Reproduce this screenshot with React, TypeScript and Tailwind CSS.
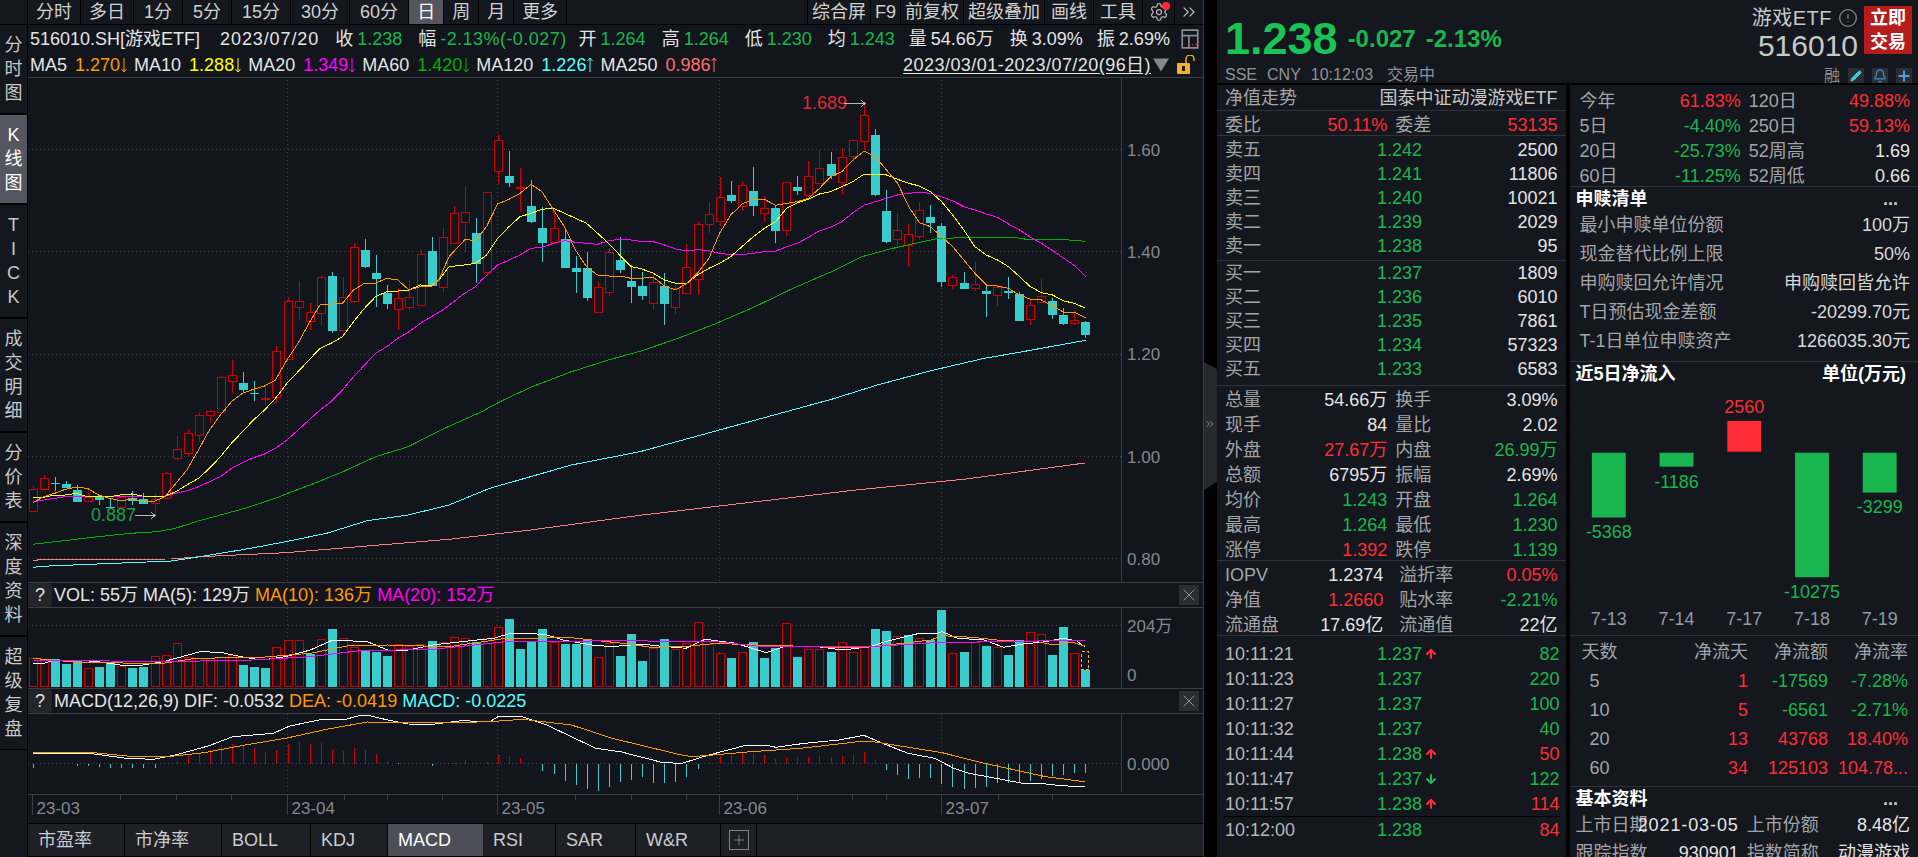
import { ArrowDown, ArrowUp, Bell, ChevronsRight, CircleAlert, Pencil, Plus, Settings, X } from "lucide-react";

const green = "text-[#19b64f]";
const red = "text-[#ff2c35]";
const white = "text-[#e4e4e4]";
const label = "text-[#a2a4a8]";

const CYAN = "#39cccc";
const RED = "#cc0000";
const DOT = "#3e4146";
const AXIS = "#3a3c42";
const AXIS_TEXT = "#85888e";

// zoomed reads -> real px
const conv = (a: number[], ox: number, sx: number, oy: number) => {
  const out: string[] = [];
  for (let i = 0; i < a.length; i += 2) out.push(`${(ox + a[i] / sx).toFixed(1)},${(oy + a[i + 1] / 3).toFixed(1)}`);
  return out;
};
const lo = (a: number[]) => conv(a, 0, 2.45, 280);
const hi = (a: number[]) => conv(a, 0, 2.45, 0);
const rt = (a: number[]) => conv(a, 640, 2.613, 100);
const subL = (a: number[]) => conv(a, 0, 2.45, 570);
const subR = (a: number[]) => conv(a, 640, 2.613, 570);

const ma5 = [
  ...lo([80,668,107,650,134,640,160,628,187,622,214,625,241,645,268,655,295,662,322,658,349,663,376,665,404,650,431,610,458,570,486,510,513,450,540,405,567,365,594,340,621,328,648,318,675,300,703,240,730,190,757,130,784,75,811,72,839,70,866,30,893,10,920,10,947,-5,975,0,1002,30,1030,20,1057,20,1075,0]),
  ...hi([1100,770,1140,718,1165,722,1192,680,1219,612,1247,598,1274,580,1301,553,1328,575,1356,630,1383,680,1410,750,1437,800,1464,825,1491,828,1518,828,1546,835]),
  ...rt([0,535,35,532,64,558,93,570,122,550,150,520,180,475,208,400,237,345,266,312,296,298,325,298,354,316,383,310,411,305,440,295,469,265,498,230,527,215,556,180,586,153,615,170,644,210,673,250,702,320,730,368,759,380,788,410,817,440,846,480,875,520,905,555,934,558,963,565,992,585,1020,598,1049,600,1078,618,1107,637,1136,637,1164,653]),
].join(" ");
const ma10 = [
  ...lo([80,652,107,652,134,645,160,645,187,640,214,650,241,650,268,650,295,645,322,642,349,648,376,650,404,648,431,635,458,615,486,595,513,565,540,530,567,490,594,455,621,420,648,390,675,355,703,310,730,275,757,240,784,205,811,190,839,170,866,125,893,85,920,50,947,35,975,33,1002,30,1030,15,1057,17,1075,0]),
  ...hi([1100,800,1138,795,1165,790,1192,765,1219,715,1247,680,1274,650,1301,640,1328,628,1356,625,1383,640,1410,655,1437,670,1464,700,1491,730,1518,765,1546,800]),
  ...rt([0,505,35,520,64,540,93,550,122,550,150,525,180,505,208,490,237,470,266,440,296,410,325,385,354,365,383,325,411,308,440,298,469,282,498,275,527,260,556,245,586,222,615,222,644,225,673,238,702,250,730,258,759,275,788,305,817,345,846,390,875,440,905,465,934,480,963,500,992,530,1020,560,1049,578,1078,585,1107,603,1136,610,1164,625]),
].join(" ");
const ma20 = [
  ...lo([80,665,107,660,134,655,160,650,187,650,376,650,404,648,431,640,458,632,486,620,513,605,540,590,567,565,594,548,621,533,648,522,675,505,703,480,730,450,757,420,784,390,811,365,839,330,866,290,893,255,920,220,947,200,975,175,1002,155,1030,130,1057,110,1084,90,1111,65,1138,40,1165,20,1180,0]),
  ...hi([1219,795,1247,780,1274,765,1301,745,1328,742,1356,730,1383,722,1410,727,1437,730,1464,733,1491,722,1518,718,1546,720]),
  ...rt([0,424,35,425,64,435,93,447,122,453,150,449,180,452,208,460,237,464,266,464,296,460,325,455,354,454,383,440,411,430,440,412,469,392,498,382,527,365,556,338,586,315,615,305,644,295,673,285,702,280,730,277,759,280,788,290,817,303,846,320,875,330,905,342,934,352,963,372,992,390,1020,412,1049,430,1078,452,1107,475,1136,497,1164,530]),
].join(" ");
const ma60 = [
  ...lo([80,793,135,785,240,770,320,760,385,755,430,745,480,725,540,705,600,685,675,655,705,640,770,610,840,575,920,530,1000,500,1080,450,1180,395,1225,365,1300,322,1400,275,1490,240,1568,214]),
  ...rt([100,715,200,670,300,620,400,565,500,515,580,470,650,448,720,430,780,415,860,413,975,412,1010,418,1120,420,1164,424]),
].join(" ");
const ma120 = [
  ...lo([80,862,120,858,280,850,420,843,490,830,600,808,700,785,800,760,900,722,1000,705,1100,675,1200,625,1300,590,1400,555,1568,515]),
  ...rt([503,897,620,855,760,812,900,775,1000,755,1164,721]),
].join(" ");
const ma250 = [
  ...lo([80,841,120,838,420,837,490,830,700,818,900,798,1100,778,1300,750,1568,706]),
  "856,490 966,479 1085,463",
].join(" ");

// c = up (red hollow) or down (cyan), top, bottom, wick high, wick low (zoomed y)
type K = [0 | 1, number, number, number, number];
const ks7: K[] = [
  [1,626,692,618,692],[1,595,628,586,632],[0,605,606,592,632],[0,610,622,603,622],[0,628,663,616,667],[1,650,662,640,665],[0,648,657,645,675],[0,677,680,658,680],[1,652,682,645,682],[0,652,660,632,675],[0,655,668,640,672],[1,658,670,640,700],[1,580,655,577,657],[1,508,535,468,542],[1,460,520,448,527],[1,406,466,400,486],[1,394,406,390,430],[1,290,395,287,400],[1,284,304,240,340],[0,307,327,276,340],[0,337,338,303,362],[1,353,355,320,375],[1,214,352,198,368],[1,64,236,52,240],[1,64,82,3,120],[1,97,124,68,150],
];
const ks1: K[] = [
  [1,830,940,825,975],[0,825,990,815,1000],[1,890,990,830,990],[1,740,902,730,910],[0,748,797,718,805],[0,816,833,765,920],[0,877,910,855,928],[1,895,928,865,990],[1,892,922,840,930],[1,762,915,750,915],[0,750,855,712,855],[1,710,862,685,875],[1,638,728,618,728],[1,637,665,558,755],[0,696,790,655,850],[1,577,815,577,825],[1,421,512,405,552],[0,525,545,453,560],[1,560,561,505,635],[0,615,663,540,670],[0,682,725,620,785],[1,685,725,630,725],[0,715,800,685,805],[0,800,812,768,880],[0,800,890,755,902],[1,862,935,845,935],[1,757,875,745,887],[0,778,808,712,818],[0,840,857,795,910],
];
const ks8: K[] = [
  [0,555,585,516,600],[1,547,610,527,630],[0,555,608,519,675],[1,565,620,555,643],[1,502,578,432,580],[1,373,538,363,585],[1,343,373,305,398],[1,292,364,232,378],[0,282,300,243,308],[1,256,318,243,333],[0,270,314,202,348],[1,325,338,288,365],[0,321,389,318,428],[1,247,391,247,408],[0,258,270,228,285],[1,229,284,183,290],[1,205,248,150,250],[0,189,225,156,238],[1,172,245,143,285],[1,121,169,118,185],[1,46,124,10,150],[0,102,282,88,288],[0,330,423,270,428],[1,391,418,340,442],[1,403,436,372,500],[1,331,407,306,416],[0,348,366,315,400],[0,375,543,370,560],[1,532,556,525,567],[0,546,565,516,568],[1,553,563,486,572],[0,570,578,555,652],[1,560,586,555,618],[0,570,576,531,597],[0,578,660,575,663],[1,616,658,598,675],[1,589,607,537,610],[0,600,642,595,657],[0,642,668,625,675],[1,661,670,632,675],[0,663,701,663,714],
];
const candles = [
  ...ks7.map((k) => [k[0], 280 + k[1] / 3, 280 + k[2] / 3, 280 + k[3] / 3, 280 + k[4] / 3]),
  ...ks1.map((k) => [k[0], k[1] / 3, k[2] / 3, k[3] / 3, k[4] / 3]),
  ...ks8.map((k) => [k[0], 100 + k[1] / 3, 100 + k[2] / 3, 100 + k[3] / 3, 100 + k[4] / 3]),
];
const barX = (i: number) => Math.round(32.6 + 11.083 * i) + 0.5;

const volTops: [0 | 1, number][] = [
  [1,265],[1,268],[0,265],[0,278],[0,270],[1,295],[0,288],[0,272],[1,288],[0,290],[0,287],[1,258],[1,255],[1,220],[1,262],[1,265],[1,265],[1,260],[1,255],[0,282],[0,288],[0,291],[1,232],[1,210],[1,210],[0,250],[1,208],[0,173],[1,205],[1,232],[0,240],[0,243],[0,255],[1,222],[1,228],[1,222],[0,210],[1,215],[1,202],[1,205],[0,213],[1,203],[1,172],[0,144],[0,234],[0,210],[0,174],[1,217],[0,218],[0,218],[0,203],[1,262],[1,220],[0,255],[0,189],
  [0,270],[1,235],[0,205],[1,238],[1,220],[1,155],[1,222],[1,248],[0,262],[1,245],[0,213],[0,262],[0,230],[1,158],[0,258],[1,238],[1,238],[0,243],[1,217],[1,247],[1,230],[0,174],[0,180],[1,198],[0,192],[1,205],[0,208],[0,117],[1,250],[0,243],[1,215],[0,225],[1,230],[0,252],[0,207],[1,187],[1,193],[0,252],[0,168],[1,250],[0,297],
];
const volWhite = [
  ...subL([80,280,107,280,134,270,187,270,240,275,295,285,350,285,400,275,440,262,490,245,540,247,590,260,640,270,700,260,760,240,815,210,900,215,950,240,1000,240,1060,225,1130,215,1210,205,1250,190,1300,190,1340,195,1380,210,1450,225,1500,230]),
  ...subR([0,222,50,228,120,235,170,208,250,220,330,248,380,228,450,228,530,240,600,230,640,215,730,190,770,192,790,185,830,205,900,210,950,232,1000,222,1060,215,1105,205,1140,212,1162,230]),
].join(" ");
const volOrange = [
  ...subL([80,265,200,278,400,280,480,265,640,262,760,250,850,228,950,225,1100,230,1240,205,1400,203,1540,222]),
  ...subR([30,232,130,228,200,220,300,225,400,228,500,232,590,232,700,218,760,210,790,197,870,202,950,212,1040,215,1080,225,1130,217,1162,228]),
].join(" ");
const volPink = [
  ...subL([80,270,400,275,620,270,760,260,880,242,1060,238,1240,215,1540,212]),
  ...subR([130,215,200,215,320,230,600,230,770,218,1040,213,1162,212]),
].join(" ");

const macdEnds = [
  594,583,582,582,587,587,590,593,594,593,593,593,582,574,558,550,540,526,522,525,533,545,540,521,516,521,519,537,543,534,540,552,574,580,582,582,589,582,578,570,582,577,555,558,564,582,603,612,632,645,658,663,650,635,630,
  620,640,640,635,620,597,579,558,555,548,550,555,568,560,560,560,558,560,558,555,545,570,600,615,627,623,623,642,650,656,653,652,640,638,638,632,628,618,615,608,610,
];
const dif = [
  ...subL([80,550,150,550,230,552,310,565,375,568,430,555,510,528,570,500,670,490,710,468,790,448,840,450,880,437,905,437,950,450,1000,462,1060,463,1130,452,1200,455,1220,440,1280,440,1340,465,1400,500,1460,535,1520,545,1568,560]),
  ...subR([60,578,110,580,180,555,270,528,330,526,355,532,430,520,520,510,585,496,630,518,700,550,770,565,820,595,860,610,930,625,1000,640,1060,642,1100,647,1162,650]),
].join(" ");
const dea = [
  ...subL([80,546,150,546,230,548,310,558,410,560,500,548,600,525,700,505,800,478,900,456,1000,458,1100,458,1200,455,1280,448,1400,465,1500,505,1568,525]),
  ...subR([100,553,135,560,190,555,290,545,420,535,570,515,610,515,790,548,900,580,1060,620,1162,635]),
].join(" ");

const monthX = [287, 497.5, 719, 941.5];

function VDots({ y1, y2 }: { y1: number; y2: number }) {
  return (
    <>
      {monthX.map((x) => (
        <line key={x} x1={x} x2={x} y1={y1} y2={y2} stroke={DOT} strokeDasharray="1 3" />
      ))}
    </>
  );
}

function MainChart() {
  return (
    <svg className="block h-full w-full" viewBox="28 78 1175 504" shapeRendering="crispEdges">
      {[149.5, 251.5, 354, 456.5, 558.5].map((y) => (
        <line key={y} x1="28" x2="1121" y1={y} y2={y} stroke={DOT} strokeDasharray="1 3" />
      ))}
      <VDots y1={80} y2={582} />
      <line x1="1121.5" x2="1121.5" y1="78" y2="582" stroke={AXIS} />
      {candles.map((k, i) => {
        const x = barX(i);
        const up = k[0] === 1;
        const c = up ? RED : CYAN;
        const top = Math.round(k[1]) + 0.5;
        const bot = Math.round(k[2]) + 0.5;
        return (
          <g key={i}>
            <line x1={x} x2={x} y1={k[3]} y2={top} stroke={c} />
            <line x1={x} x2={x} y1={bot} y2={k[4]} stroke={c} />
            {up ? (
              <rect x={x - 4} y={top} width="8" height={Math.max(bot - top, 1)} fill="#12151c" stroke={c} />
            ) : (
              <rect x={x - 4.5} y={top} width="9" height={Math.max(bot - top, 1)} fill={c} />
            )}
          </g>
        );
      })}
      <polyline points={ma250} fill="none" stroke="#ff7f7f" />
      <polyline points={ma120} fill="none" stroke="#55ffff" />
      <polyline points={ma60} fill="none" stroke="#00b000" />
      <polyline points={ma20} fill="none" stroke="#ff00ff" />
      <polyline points={ma10} fill="none" stroke="#ffff00" />
      <polyline points={ma5} fill="none" stroke="#ff9900" />
      <text x="802" y="109" fontSize="18" fill="#e02a33">1.689</text>
      <path d="M844 103.5H865M861 100l4 3.5l-4 3.5" fill="none" stroke="#b8b8b8" />
      <text x="91" y="521" fontSize="18" fill="#19a04a">0.887</text>
      <path d="M135 515.5H155M151 512l4 3.5l-4 3.5" fill="none" stroke="#b8b8b8" />
      {[["1.60", 155.5], ["1.40", 257.5], ["1.20", 360], ["1.00", 462.5], ["0.80", 564.5]].map(([t, y]) => (
        <text key={t} x="1127" y={y} fontSize="17" fill={AXIS_TEXT}>{t}</text>
      ))}
    </svg>
  );
}

function VolChart() {
  return (
    <svg className="block h-full w-full" viewBox="28 608 1175 80" shapeRendering="crispEdges">
      <line x1="28" x2="1121" y1="625.5" y2="625.5" stroke={DOT} strokeDasharray="1 3" />
      <VDots y1={608} y2={688} />
      <line x1="1121.5" x2="1121.5" y1="608" y2="688" stroke={AXIS} />
      {volTops.map(([up, t], i) => {
        const x = barX(i);
        const top = Math.round(570 + t / 3) + 0.5;
        return up ? (
          <rect key={i} x={x - 4} y={top} width="8" height={686.5 - top} fill="#12151c" stroke={RED} />
        ) : (
          <rect key={i} x={x - 4.5} y={top} width="9" height={687 - top} fill={CYAN} />
        );
      })}
      <rect x="1081.5" y="651.5" width="7" height="18" fill="none" stroke="#f0b030" strokeDasharray="3 2" />
      <polyline points={volWhite} fill="none" stroke="#ffffff" />
      <polyline points={volOrange} fill="none" stroke="#ff9900" />
      <polyline points={volPink} fill="none" stroke="#ff00ff" />
      <text x="1127" y="632" fontSize="17" fill={AXIS_TEXT}>204万</text>
      <text x="1127" y="681" fontSize="17" fill={AXIS_TEXT}>0</text>
    </svg>
  );
}

function MacdChart() {
  return (
    <svg className="block h-full w-full" viewBox="28 714 1175 80" shapeRendering="crispEdges">
      <line x1="28" x2="1121" y1="763.5" y2="763.5" stroke={DOT} strokeDasharray="1 3" />
      <VDots y1={714} y2={794} />
      <line x1="1121.5" x2="1121.5" y1="714" y2="792" stroke={AXIS} />
      {macdEnds.map((e, i) => {
        const x = barX(i);
        return <line key={i} x1={x} x2={x} y1="763.5" y2={570 + e / 3} stroke={e < 580 ? RED : CYAN} />;
      })}
      <polyline points={dif} fill="none" stroke="#ffffff" />
      <polyline points={dea} fill="none" stroke="#ff9900" />
      <text x="1127" y="769.5" fontSize="17" fill={AXIS_TEXT}>0.000</text>
    </svg>
  );
}

function AxisChart() {
  const minor = [120, 176, 231, 344, 387, 442, 575, 631, 686, 797, 852, 886, 998, 1052];
  return (
    <svg className="block h-full w-full" viewBox="28 795 1175 28" shapeRendering="crispEdges">
      {minor.map((x) => (
        <line key={x} x1={x + 0.5} x2={x + 0.5} y1="795" y2="800" stroke={AXIS} />
      ))}
      {[["23-03", 32.5], ["23-04", 287.5], ["23-05", 497.5], ["23-06", 719.5], ["23-07", 941.5]].map(([t, x]) => (
        <g key={t}>
          <line x1={x} x2={x} y1="795" y2="815" stroke={AXIS} />
          <text x={Number(x) + 4} y="814" fontSize="17" fill={AXIS_TEXT}>{t}</text>
        </g>
      ))}
    </svg>
  );
}

function FlowChart() {
  const bars = [
    { x: 1591, top: 453, bot: 518, v: "-5368", ly: 539, d: "7-13" },
    { x: 1659, top: 453, bot: 467, v: "-1186", ly: 488, d: "7-14" },
    { x: 1727, top: 421, bot: 452, v: "2560", ly: 413, d: "7-17", up: true },
    { x: 1795, top: 453, bot: 578, v: "-10275", ly: 599, d: "7-18" },
    { x: 1863, top: 453, bot: 493, v: "-3299", ly: 514, d: "7-19" },
  ];
  return (
    <svg className="block h-full w-full" viewBox="1570 386 348 250">
      {bars.map((b) => (
        <g key={b.d}>
          <rect x={b.x} y={b.top} width="34" height={b.bot - b.top} fill={b.up ? "#ff2c35" : "#19b64f"} />
          <text x={b.x + 17} y={b.ly} fontSize="18" textAnchor="middle" fill={b.up ? "#ff2c35" : "#19b64f"}>{b.v}</text>
          <text x={b.x + 17} y="626" fontSize="18" textAnchor="middle" fill="#929aa2">{b.d}</text>
        </g>
      ))}
    </svg>
  );
}

function TrendArrow({ up, className }: { up?: boolean; className: string }) {
  return (
    <svg viewBox="0 0 7 16" className={`h-4 w-2 ${className}`} fill="none" stroke="currentColor">
      {up ? <path d="M3.5 15V1M1 4l2.5-3L6 4" /> : <path d="M3.5 1v14M1 12l2.5 3L6 12" />}
    </svg>
  );
}

function Ma({ name, value, color, up }: { name: string; value: string; color: string; up?: boolean }) {
  return (
    <span className="mr-1.5 flex items-center gap-2">
      <span className="text-[#e4e4e4]">{name}</span>
      <span className={`flex items-center ${color}`}>
        {value}
        <TrendArrow up={up} className="" />
      </span>
    </span>
  );
}

function Quote({ k, v, ml = "ml-4", color = green, wide }: { k: string; v: string; ml?: string; color?: string; wide?: boolean }) {
  return (
    <span className={`flex gap-1 ${ml}`}>
      <span className={white}>{k}</span>
      <span className={`${color} ${wide ? "tracking-wide" : ""}`}>{v}</span>
    </span>
  );
}

function StatRow({ cells, gap = "gap-2" }: { cells: [string, string, string, string, string, string]; gap?: string }) {
  const [a, av, ac, b, bv, bc] = cells;
  return (
    <div className={`grid h-6 grid-cols-2 items-center px-2 ${gap}`}>
      <div className="flex justify-between whitespace-nowrap">
        <span className={label}>{a}</span>
        <span className={ac}>{av}</span>
      </div>
      <div className="flex justify-between whitespace-nowrap">
        <span className={label}>{b}</span>
        <span className={bc}>{bv}</span>
      </div>
    </div>
  );
}

function OrderRow({ name, price, qty }: { name: string; price: string; qty: string }) {
  return (
    <div className="flex h-6 items-center px-2">
      <span className={`w-36 ${label}`}>{name}</span>
      <span className={`flex-1 pl-2 ${green}`}>{price}</span>
      <span className={white}>{qty}</span>
    </div>
  );
}

function TickRow({ t, p, dir, v, vc }: { t: string; p: string; dir?: "up" | "down"; v: string; vc: string }) {
  return (
    <div className="flex h-6 items-center">
      <span className="w-36 text-[#b4b6ba]">{t}</span>
      <span className={`flex flex-1 items-center pl-2 ${green}`}>
        {p}
        {dir === "up" && <ArrowUp className={`ml-0.5 size-3.5 ${red}`} strokeWidth={3.5} />}
        {dir === "down" && <ArrowDown className={`ml-0.5 size-3.5 ${green}`} strokeWidth={3.5} />}
      </span>
      <span className={vc}>{v}</span>
    </div>
  );
}

const topTabs = [
  ["分时", "px-2"], ["多日", "px-2"], ["1分", "px-2.5"], ["5分", "px-2.5"], ["15分", "px-2.5"], ["30分", "px-2.5"], ["60分", "px-2.5"], ["日", "px-2 bg-[#55565f] text-white"], ["周", "px-2"], ["月", "px-2"], ["更多", "px-2"],
];
const rightTabs = [
  ["综合屏", "px-1"], ["F9", "px-1"], ["前复权", "px-1"], ["超级叠加", "px-1"], ["画线", "px-1.5"], ["工具", "px-1.5"],
];
const sideTabs = [
  { t: ["分", "时", "图"] },
  { t: ["K", "线", "图"], active: true },
  { t: ["T", "I", "C", "K"] },
  { t: ["成", "交", "明", "细"] },
  { t: ["分", "价", "表"] },
  { t: ["深", "度", "资", "料"] },
  { t: ["超", "级", "复", "盘"] },
];
const bottomTabs = ["市盈率", "市净率", "BOLL", "KDJ", "MACD", "RSI", "SAR", "W&R"];

const sells = [["卖五", "1.242", "2500"], ["卖四", "1.241", "11806"], ["卖三", "1.240", "10021"], ["卖二", "1.239", "2029"], ["卖一", "1.238", "95"]];
const buys = [["买一", "1.237", "1809"], ["买二", "1.236", "6010"], ["买三", "1.235", "7861"], ["买四", "1.234", "57323"], ["买五", "1.233", "6583"]];
const stats: [string, string, string, string, string, string][] = [
  ["总量", "54.66万", white, "换手", "3.09%", white],
  ["现手", "84", white, "量比", "2.02", white],
  ["外盘", "27.67万", red, "内盘", "26.99万", green],
  ["总额", "6795万", white, "振幅", "2.69%", white],
  ["均价", "1.243", green, "开盘", "1.264", green],
  ["最高", "1.264", green, "最低", "1.230", green],
  ["涨停", "1.392", red, "跌停", "1.139", green],
];
const iopv: [string, string, string, string, string, string][] = [
  ["IOPV", "1.2374", white, "溢折率", "0.05%", red],
  ["净值", "1.2660", red, "贴水率", "-2.21%", green],
  ["流通盘", "17.69亿", white, "流通值", "22亿", white],
];
const perf: [string, string, string, string, string, string][] = [
  ["今年", "61.83%", red, "120日", "49.88%", red],
  ["5日", "-4.40%", green, "250日", "59.13%", red],
  ["20日", "-25.73%", green, "52周高", "1.69", white],
  ["60日", "-11.25%", green, "52周低", "0.66", white],
];
const redeem = [
  ["最小申赎单位份额", "100万"],
  ["现金替代比例上限", "50%"],
  ["申购赎回允许情况", "申购赎回皆允许"],
  ["T日预估现金差额", "-20299.70元"],
  ["T-1日单位申赎资产", "1266035.30元"],
];
const flows = [
  ["5", "1", "-17569", "-7.28%", red, green],
  ["10", "5", "-6561", "-2.71%", red, green],
  ["20", "13", "43768", "18.40%", red, red],
  ["60", "34", "125103", "104.78...", red, red],
];

export default function App() {
  return (
    <div className="flex h-screen w-screen overflow-hidden bg-black font-['Liberation_Sans','Noto_Sans_CJK_SC',sans-serif] text-lg text-[#e4e4e4]">
      {/* left rail */}
      <div className="flex w-7 shrink-0 flex-col border-r border-black bg-[#14171d] pt-6 text-center text-[#c8c8c8]">
        {sideTabs.map((s, i) => (
          <div key={i} className={`border-y border-black py-2 leading-6 ${s.active ? "bg-[#55565f] text-white" : ""}`}>
            {s.t.map((c, j) => (
              <div key={j}>{c}</div>
            ))}
          </div>
        ))}
      </div>

      {/* chart column */}
      <div className="flex min-w-0 flex-1 flex-col bg-[#12151c]">
        <div className="flex h-6 shrink-0 box-content border-b border-black bg-[#14171d] leading-6 text-[#d0d0d0]">
          {topTabs.map(([t, c]) => (
            <div key={t} className={`border-r border-black ${c}`}>{t}</div>
          ))}
          <div className="ml-auto flex border-l border-black">
            {rightTabs.map(([t, c]) => (
              <div key={t} className={`border-r border-black ${c}`}>{t}</div>
            ))}
            <div className="relative flex w-8 items-center justify-center border-r border-black">
              <Settings className="size-5 text-[#b8b8b8]" strokeWidth={1.5} />
              <span className="absolute right-1 top-0.5 size-2 rounded-full bg-[#ff2c35]" />
            </div>
            <div className="flex w-7 items-center justify-center">
              <ChevronsRight className="size-5 text-[#b8b8b8]" strokeWidth={1.5} />
            </div>
          </div>
        </div>

        <div className="shrink-0 border-b border-[#3a3c42] pl-0.5">
          <div className="mt-0.5 flex h-6 items-center whitespace-nowrap">
            <span>516010.SH[游戏ETF]</span>
            <span className="ml-5 tracking-wider">2023/07/20</span>
            <Quote k="收" v="1.238" />
            <Quote k="幅" v="-2.13%(-0.027)" wide />
            <Quote k="开" v="1.264" ml="ml-3" />
            <Quote k="高" v="1.264" />
            <Quote k="低" v="1.230" />
            <Quote k="均" v="1.243" />
            <Quote k="量" v="54.66万" ml="ml-3.5" color={white} />
            <Quote k="换" v="3.09%" color={white} />
            <Quote k="振" v="2.69%" ml="ml-3.5" color={white} />
            <svg viewBox="0 0 18 18" className="ml-2.5 size-5 text-[#8a8c90]" fill="none" stroke="currentColor" strokeWidth="1.5">
              <path d="M2 1h14v16H2zM2 6h14M8 6v11" />
              <path d="M11 14h1M14 14h2" stroke="#ff2c35" />
            </svg>
          </div>
          <div className="mt-0.5 flex h-6 items-center whitespace-nowrap pr-1.5">
            <Ma name="MA5" value="1.270" color="text-[#ff9900]" />
            <Ma name="MA10" value="1.288" color="text-[#ffff00]" />
            <Ma name="MA20" value="1.349" color="text-[#ff00ff]" />
            <Ma name="MA60" value="1.420" color="text-[#00b000]" />
            <Ma name="MA120" value="1.226" color="text-[#55ffff]" up />
            <Ma name="MA250" value="0.986" color="text-[#ff7070]" up />
            <span className="ml-auto tracking-wide underline underline-offset-2">2023/03/01-2023/07/20(96日)</span>
            <svg viewBox="0 0 17 14" className="ml-0.5 h-4 w-4 text-[#85888e]" fill="currentColor">
              <path d="M0 0h17L8.5 14z" />
            </svg>
            <svg viewBox="0 0 20 20" className="ml-2 size-5">
              <rect x="0" y="8" width="13" height="11" rx="1" fill="#f0b030" />
              <rect x="5" y="11" width="3" height="5" fill="#14171d" />
              <path d="M9 8V4a4 4 0 0 1 8 0v2" fill="none" stroke="#f0b030" strokeWidth="1.5" />
            </svg>
          </div>
        </div>

        <div className="min-h-0 flex-1">
          <MainChart />
        </div>

        <div className="flex h-6 shrink-0 box-content items-center border-y border-[#3a3c42] pr-1">
          <span className="flex size-6 shrink-0 items-center justify-center rounded-sm bg-[#23252b]">?</span>
          <span className="ml-0.5 whitespace-pre">VOL: 55万 MA(5): 129万 </span>
          <span className="whitespace-pre text-[#ff9900]">MA(10): 136万 </span>
          <span className="text-[#ff00ff]">MA(20): 152万</span>
          <span className="ml-auto flex size-5 items-center justify-center bg-[#2c2d33]">
            <X className="size-5 text-[#a8a8a8]" strokeWidth={1} />
          </span>
        </div>
        <div className="h-20 shrink-0">
          <VolChart />
        </div>

        <div className="flex h-6 shrink-0 box-content items-center border-y border-[#3a3c42] pr-1">
          <span className="flex size-6 shrink-0 items-center justify-center rounded-sm bg-[#23252b]">?</span>
          <span className="ml-0.5 whitespace-pre">MACD(12,26,9) DIF: -0.0532 </span>
          <span className="whitespace-pre text-[#ff9900]">DEA: -0.0419 </span>
          <span className="text-[#55ffff]">MACD: -0.0225</span>
          <span className="ml-auto flex size-5 items-center justify-center bg-[#2c2d33]">
            <X className="size-5 text-[#a8a8a8]" strokeWidth={1} />
          </span>
        </div>
        <div className="h-20 shrink-0">
          <MacdChart />
        </div>

        <div className="h-7 shrink-0 box-content border-t border-[#3a3c42]">
          <AxisChart />
        </div>

        <div className="flex h-8 shrink-0 box-content items-stretch border-y border-black bg-[#1f2026] leading-8 text-[#c8ccd0]">
          {bottomTabs.map((t) => (
            <div key={t} className={`pl-2.5 pr-8 ${t === "MACD" ? "bg-[#4d4e58] text-white" : "border-r border-black"}`}>{t}</div>
          ))}
          <div className="flex w-9 items-center justify-center border-r border-black">
            <span className="flex size-5 items-center justify-center border border-[#808288]">
              <Plus className="size-4 text-[#a8a8a8]" strokeWidth={1} />
            </span>
          </div>
        </div>
      </div>

      {/* gutter */}
      <div className="flex w-3.5 shrink-0 flex-col border-l border-[#3a3c42] bg-black pt-[362px]">
        <div className="relative h-32">
          <svg viewBox="0 0 14 128" className="h-full w-full" preserveAspectRatio="none">
            <polygon points="0,0 14,7 14,120 0,128" fill="#27282e" />
          </svg>
          <ChevronsRight className="absolute left-0 top-14 size-3 text-[#a8a8a8]" strokeWidth={1.5} />
        </div>
      </div>

      {/* quote panel */}
      <div className="flex w-[701px] shrink-0 flex-col bg-[#14171d]">
        <div className="flex h-[85px] shrink-0 justify-between overflow-hidden border-b-2 border-black pl-2 pr-1.5">
          <div>
            <div className="flex items-center pt-4 font-bold">
              <span className="text-[45px] leading-none text-[#19c455]">1.238</span>
              <span className={`ml-2.5 text-2xl ${green}`}>-0.027</span>
              <span className={`ml-2.5 text-2xl ${green}`}>-2.13%</span>
            </div>
            <div className="mt-1 flex gap-2.5 text-base leading-5 text-[#8f9298]">
              <span>SSE</span>
              <span>CNY</span>
              <span>10:12:03</span>
              <span className="ml-1">交易中</span>
            </div>
          </div>
          <div className="flex flex-col items-end pt-1.5">
            <div className="flex">
              <div className="flex flex-col items-end">
                <div className="flex items-center gap-1.5 text-xl leading-6 tracking-wide text-[#c8c8c8]">
                  游戏ETF
                  <CircleAlert className="size-5 text-[#85888e]" strokeWidth={1.5} />
                </div>
                <div className="text-3xl leading-8 text-[#c8c8c8]">516010</div>
              </div>
              <div className="ml-1.5 flex h-12 w-12 flex-col items-center justify-center bg-[#b71c1c] text-center font-bold leading-6 text-white">
                <span>立即</span>
                <span>交易</span>
              </div>
            </div>
            <div className="mt-1 flex h-5 items-center gap-2">
              <span className="text-base text-[#8a8c90]">融</span>
              <span className="flex size-4 items-center justify-center bg-[#2c2d33]">
                <Pencil className="size-3 fill-[#39cccc] text-[#39cccc]" />
              </span>
              <span className="flex size-4 items-center justify-center bg-[#2c2d33]">
                <Bell className="size-3.5 text-[#3a90c8]" />
              </span>
              <span className="flex size-4 items-center justify-center bg-[#2c2d33]">
                <Plus className="size-4 text-[#4aa0e0]" strokeWidth={3} />
              </span>
            </div>
          </div>
        </div>

        <div className="flex min-h-0 flex-1 gap-1 bg-black">
          {/* book */}
          <div className="flex-1 overflow-hidden bg-[#14171d]">
            <div className="flex h-6.5 items-center justify-between border-b border-[#2f3238] px-2">
              <span className={label}>净值走势</span>
              <span className="text-[#c8c8c8]">国泰中证动漫游戏ETF</span>
            </div>
            <div className="border-b border-[#2f3238]">
              <StatRow cells={["委比", "50.11%", red, "委差", "53135", red]} />
            </div>
            <div className="border-b border-[#2f3238] py-0.5">
              {sells.map((r) => (
                <OrderRow key={r[0]} name={r[0]} price={r[1]} qty={r[2]} />
              ))}
            </div>
            <div className="border-b border-[#2f3238] pb-1">
              {buys.map((r) => (
                <OrderRow key={r[0]} name={r[0]} price={r[1]} qty={r[2]} />
              ))}
            </div>
            <div className="flex flex-col gap-px border-b border-[#2f3238]">
              {stats.map((r) => (
                <StatRow key={r[0]} cells={r} />
              ))}
            </div>
            <div className="flex flex-col gap-px border-b border-[#2f3238]">
              {iopv.map((r) => (
                <StatRow key={r[0]} cells={r} gap="gap-4" />
              ))}
            </div>
            <div className="mx-1.5 flex flex-col gap-px border-b border-black pt-1.5 pl-0.5">
              <TickRow t="10:11:21" p="1.237" dir="up" v="82" vc={green} />
              <TickRow t="10:11:23" p="1.237" v="220" vc={green} />
              <TickRow t="10:11:27" p="1.237" v="100" vc={green} />
              <TickRow t="10:11:32" p="1.237" v="40" vc={green} />
              <TickRow t="10:11:44" p="1.238" dir="up" v="50" vc={red} />
              <TickRow t="10:11:47" p="1.237" dir="down" v="122" vc={green} />
              <TickRow t="10:11:57" p="1.238" dir="up" v="114" vc={red} />
            </div>
            <div className="mx-1.5 pl-0.5 pt-px">
              <TickRow t="10:12:00" p="1.238" v="84" vc={red} />
            </div>
          </div>

          {/* fund info */}
          <div className="flex-1 overflow-hidden bg-[#14171d]">
            <div className="flex flex-col gap-px border-b border-[#2f3238] pt-0.5 [&>div]:pl-2.5">
              {perf.map((r) => (
                <StatRow key={r[0]} cells={r} />
              ))}
            </div>
            <div className="flex h-6 items-center justify-between pl-1.5 pr-5 font-bold text-white">
              <span>申赎清单</span>
              <span className="text-[#c8c8c8]">...</span>
            </div>
            <div className="flex flex-col gap-px border-b border-[#2f3238] pb-1.5 pl-2.5 pr-2">
              {redeem.map((r) => (
                <div key={r[0]} className="flex h-7 items-center justify-between">
                  <span className={label}>{r[0]}</span>
                  <span className="text-[#d8d8d8]">{r[1]}</span>
                </div>
              ))}
            </div>
            <div className="flex h-6 items-center justify-between pl-1.5 pr-3 font-bold text-white">
              <span>近5日净流入</span>
              <span>单位(万元)</span>
            </div>
            <div className="h-62.5 border-b border-[#2f3238]">
              <FlowChart />
            </div>
            <div className="flex flex-col gap-px border-b border-[#2f3238] pb-1 pl-3 pr-2.5 pt-0.5">
              <div className={`flex h-7 items-center ${label}`}>
                <span className="flex-1">天数</span>
                <span>净流天</span>
                <span className="w-20 text-right">净流额</span>
                <span className="w-20 text-right">净流率</span>
              </div>
              {flows.map((r) => (
                <div key={r[0]} className="flex h-7 items-center">
                  <span className={`flex-1 pl-2 ${label}`}>{r[0]}</span>
                  <span className={r[4]}>{r[1]}</span>
                  <span className={`w-20 text-right ${r[5]}`}>{r[2]}</span>
                  <span className={`w-20 text-right whitespace-nowrap ${r[5]}`}>{r[3]}</span>
                </div>
              ))}
            </div>
            <div className="flex h-6 items-center justify-between pl-1.5 pr-5 font-bold text-white">
              <span>基本资料</span>
              <span className="text-[#c8c8c8]">...</span>
            </div>
            <div className="grid h-7 grid-cols-2 items-center gap-2 pl-1.5 pr-2">
              <div className="flex">
                <span className={`w-14 shrink-0 whitespace-nowrap ${label}`}>上市日期</span>
                <span className="flex-1 text-right tracking-wider">2021-03-05</span>
              </div>
              <div className="flex justify-between">
                <span className={label}>上市份额</span>
                <span>8.48亿</span>
              </div>
            </div>
            <div className="grid h-7 grid-cols-2 items-center gap-2 pl-1.5 pr-2">
              <div className="flex justify-between">
                <span className={label}>跟踪指数</span>
                <span>930901</span>
              </div>
              <div className="flex justify-between">
                <span className={label}>指数简称</span>
                <span>动漫游戏</span>
              </div>
            </div>
          </div>
        </div>
      </div>
    </div>
  );
}
